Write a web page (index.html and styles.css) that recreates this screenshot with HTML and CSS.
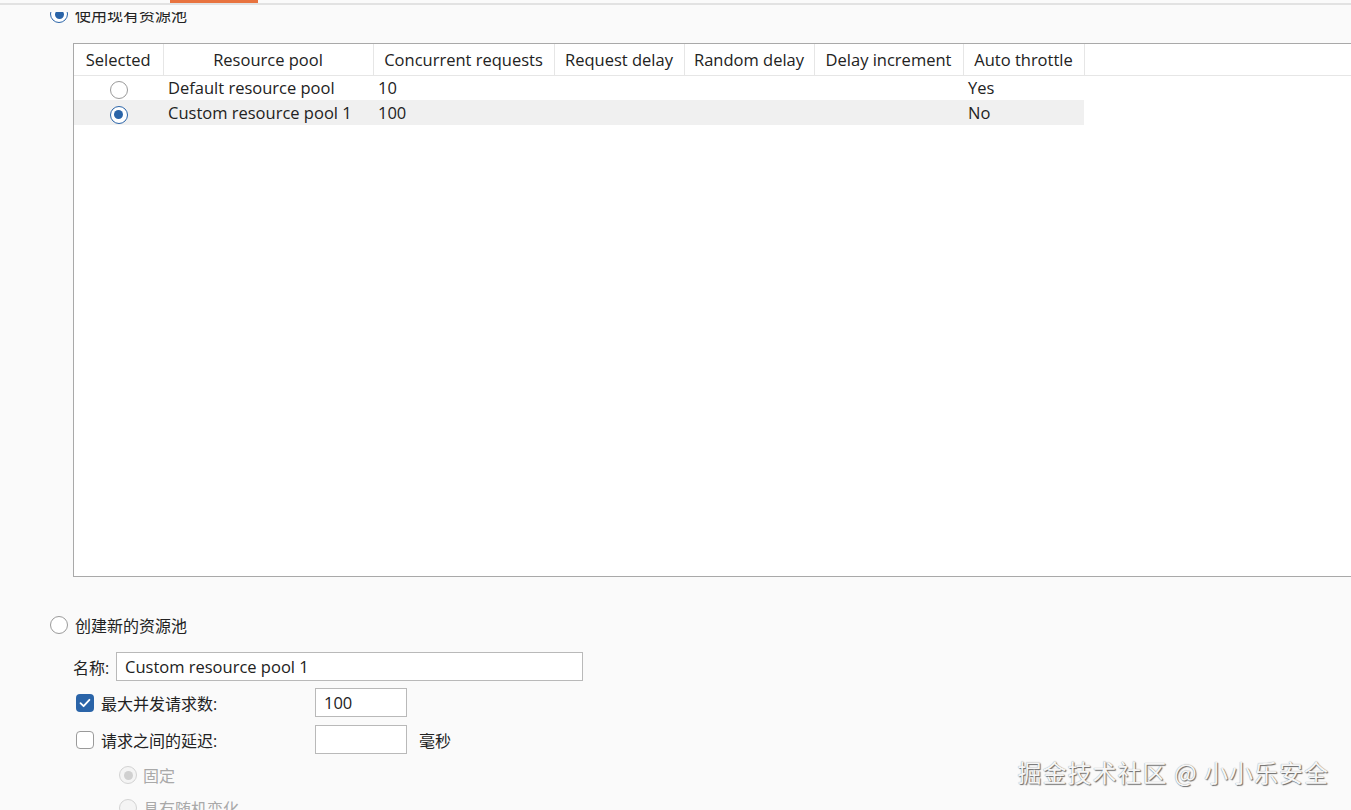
FILE: index.html
```html
<!DOCTYPE html>
<html lang="zh-CN">
<head>
<meta charset="utf-8">
<title>Resource pool</title>
<link rel="stylesheet" href="styles.css">
</head>
<body>
<div class="tabbar"><div class="tab-indicator"></div></div>
<div class="gap-strip"></div>
<div class="viewport">
  <div class="content">
    <label class="radio-row first">
      <span class="radio checked"></span>
      <span class="radio-label">使用现有资源池</span>
    </label>

    <div class="table-box">
      <table class="pools">
        <colgroup>
          <col class="c1"><col class="c2"><col class="c3"><col class="c4"><col class="c5"><col class="c6"><col class="c7"><col>
        </colgroup>
        <thead>
          <tr>
            <th>Selected</th>
            <th>Resource pool</th>
            <th>Concurrent requests</th>
            <th>Request delay</th>
            <th>Random delay</th>
            <th>Delay increment</th>
            <th>Auto throttle</th>
            <th class="filler"></th>
          </tr>
        </thead>
        <tbody>
          <tr>
            <td class="sel"><span class="radio"></span></td>
            <td>Default resource pool</td>
            <td>10</td>
            <td></td>
            <td></td>
            <td></td>
            <td>Yes</td>
            <td class="filler"></td>
          </tr>
          <tr class="selected">
            <td class="sel"><span class="radio checked"></span></td>
            <td>Custom resource pool 1</td>
            <td>100</td>
            <td></td>
            <td></td>
            <td></td>
            <td>No</td>
            <td class="filler"></td>
          </tr>
        </tbody>
      </table>
    </div>

    <label class="radio-row second">
      <span class="radio"></span>
      <span class="radio-label">创建新的资源池</span>
    </label>

    <div class="name-row">
      <span class="field-label">名称:</span>
      <div class="text-input wide">Custom resource pool 1</div>
    </div>

    <div class="check-row first-check">
      <span class="checkbox checked">
        <svg viewBox="0 0 18 18" width="18" height="18"><path d="M4.5 9.2 L7.6 12.2 L13.4 5.8" fill="none" stroke="#fff" stroke-width="1.8" stroke-linecap="round" stroke-linejoin="round"/></svg>
      </span>
      <span class="check-label">最大并发请求数:</span>
      <div class="text-input small">100</div>
    </div>

    <div class="check-row">
      <span class="checkbox"></span>
      <span class="check-label">请求之间的延迟:</span>
      <div class="text-input small"></div>
      <span class="unit">毫秒</span>
    </div>

    <label class="radio-row sub">
      <span class="radio checked disabled"></span>
      <span class="radio-label disabled">固定</span>
    </label>
    <label class="radio-row sub">
      <span class="radio disabled"></span>
      <span class="radio-label disabled">具有随机变化</span>
    </label>
  </div>
</div>
<div class="watermark">掘金技术社区 @ 小小乐安全</div>
</body>
</html>
```

FILE: styles.css
```css
* { box-sizing: border-box; }

html, body {
  margin: 0;
  padding: 0;
  height: 810px;
  overflow: hidden;
}

body {
  background: #fafafa;
  font-family: "Open Sans", "Noto Sans CJK SC", sans-serif;
  font-size: 16.5px;
  color: #222;
  position: relative;
}

.tabbar {
  height: 5px;
  padding-left: 170px;
  border-bottom: 2px solid #e2e2e2;
}

.tab-indicator {
  width: 88px;
  height: 3px;
  background: #e8733f;
}

.gap-strip {
  height: 7px;
}

.viewport {
  height: 800px;
  overflow: hidden;
}

.content {
  margin-top: -9px;
  display: flex;
  flex-direction: column;
}

.radio-row {
  display: flex;
  align-items: center;
  height: 22px;
  padding-left: 50px;
}

.radio-row.first {
  margin-bottom: 2px;
}

.radio-row.second {
  margin-top: 37px;
}

.radio-row.sub {
  padding-left: 119px;
  height: 22px;
  margin-top: 10px;
}

.radio-row.sub + .radio-row.sub {
  margin-top: 11px;
}

.radio {
  display: inline-block;
  width: 18px;
  height: 18px;
  border-radius: 50%;
  border: 1px solid #9a9a9a;
  background: #fff;
  position: relative;
  flex: none;
}

.radio.checked {
  border: 1.5px solid #2a64a8;
}

.radio.checked::after {
  content: "";
  position: absolute;
  left: 50%;
  top: 50%;
  width: 9px;
  height: 9px;
  margin: -4.5px 0 0 -4.5px;
  border-radius: 50%;
  background: #2a64a8;
}

.radio.disabled {
  border: 1px solid #d3d3d3;
  background: #f4f4f4;
}

.radio.checked.disabled::after {
  background: #d0d0d0;
}

.radio-label {
  margin-left: 7px;
  font-size: 16px;
}

.radio-label.disabled {
  color: #a9a9a9;
  margin-left: 6px;
}

/* table */
.table-box {
  margin-top: 16px;
  margin-left: 73px;
  height: 534px;
  border: 1px solid #a9a9a9;
  border-right: none;
  background: #fff;
}

.pools {
  width: 100%;
  border-collapse: collapse;
  table-layout: fixed;
}

.pools col.c1 { width: 89px; }
.pools col.c2 { width: 210px; }
.pools col.c3 { width: 181px; }
.pools col.c4 { width: 130px; }
.pools col.c5 { width: 130px; }
.pools col.c6 { width: 149px; }
.pools col.c7 { width: 121px; }

.pools th {
  height: 31px;
  font-weight: normal;
  text-align: center;
  white-space: nowrap;
  padding: 0;
  border-right: 1px solid #e6e6e6;
  border-bottom: 1px solid #e6e6e6;
}

.pools th.filler {
  border-right: none;
}

.pools td {
  height: 25px;
  padding: 0 0 0 5px;
  white-space: nowrap;
}

.pools td.sel {
  text-align: center;
  padding: 0;
}

.pools td.sel .radio {
  vertical-align: middle;
}

.pools tr.selected td {
  background: #f0f0f0;
}

.pools tr.selected td.filler {
  background: transparent;
}

/* form */
.name-row {
  display: flex;
  align-items: center;
  margin-top: 16px;
  padding-left: 73px;
}

.field-label {
  font-size: 16px;
  width: 43px;
}

.text-input {
  height: 29px;
  border: 1px solid #b9b9b9;
  background: #fff;
  font-size: 16.5px;
  line-height: 27px;
  padding-left: 8px;
}

.text-input.wide {
  width: 467px;
}

.text-input.small {
  width: 92px;
}

.check-row {
  display: flex;
  align-items: center;
  padding-left: 76px;
  margin-top: 8px;
}

.check-row.first-check {
  margin-top: 7px;
}

.checkbox {
  width: 18px;
  height: 18px;
  border-radius: 4px;
  border: 1px solid #9a9a9a;
  background: #fff;
  flex: none;
  display: flex;
}

.checkbox.checked {
  border: none;
  background: #2a64a8;
}

.check-label {
  font-size: 16px;
  margin-left: 7px;
  width: 214px;
}

.unit {
  font-size: 16px;
  margin-left: 12px;
}

.watermark {
  position: absolute;
  right: 22px;
  top: 754px;
  font-family: "Noto Sans CJK SC", sans-serif;
  font-size: 24px;
  letter-spacing: 1px;
  color: #f6f6f6;
  text-shadow: 1px 1px 1px #6a6a6a, 0 0 1px #8a8a8a;
}
```
